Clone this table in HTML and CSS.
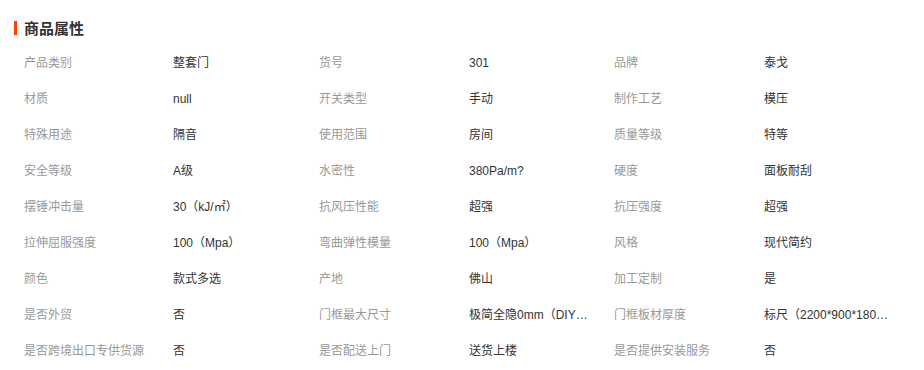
FILE: index.html
```html
<!DOCTYPE html>
<html lang="zh-CN">
<head>
<meta charset="utf-8">
<title>商品属性</title>
<link rel="stylesheet" href="styles.css">
</head>
<body>
<div class="panel">
  <h2 class="title"><span class="title-bar"></span>商品属性</h2>
  <div class="attrs">
    <div class="k">产品类别</div><div class="v">整套门</div>
    <div class="k">货号</div><div class="v">301</div>
    <div class="k">品牌</div><div class="v">泰戈</div>

    <div class="k">材质</div><div class="v">null</div>
    <div class="k">开关类型</div><div class="v">手动</div>
    <div class="k">制作工艺</div><div class="v">模压</div>

    <div class="k">特殊用途</div><div class="v">隔音</div>
    <div class="k">使用范围</div><div class="v">房间</div>
    <div class="k">质量等级</div><div class="v">特等</div>

    <div class="k">安全等级</div><div class="v">A级</div>
    <div class="k">水密性</div><div class="v">380Pa/m?</div>
    <div class="k">硬度</div><div class="v">面板耐刮</div>

    <div class="k">摆锤冲击量</div><div class="v">30（kJ/㎡）</div>
    <div class="k">抗风压性能</div><div class="v">超强</div>
    <div class="k">抗压强度</div><div class="v">超强</div>

    <div class="k">拉伸屈服强度</div><div class="v">100（Mpa）</div>
    <div class="k">弯曲弹性模量</div><div class="v">100（Mpa）</div>
    <div class="k">风格</div><div class="v">现代简约</div>

    <div class="k">颜色</div><div class="v">款式多选</div>
    <div class="k">产地</div><div class="v">佛山</div>
    <div class="k">加工定制</div><div class="v">是</div>

    <div class="k">是否外贸</div><div class="v">否</div>
    <div class="k">门框最大尺寸</div><div class="v"><span class="clip clip-a">极简全隐0mm（DIY定制尺寸）</span></div>
    <div class="k">门框板材厚度</div><div class="v"><span class="clip clip-b">标尺（2200*900*180mm）</span></div>

    <div class="k">是否跨境出口专供货源</div><div class="v">否</div>
    <div class="k">是否配送上门</div><div class="v">送货上楼</div>
    <div class="k">是否提供安装服务</div><div class="v">否</div>
  </div>
</div>
</body>
</html>
```

FILE: styles.css
```css
html, body {
  margin: 0;
  padding: 0;
  background: #ffffff;
}

body {
  font-family: "Liberation Sans", "Noto Sans CJK SC", sans-serif;
  font-size: 12px;
  color: #333333;
}

.panel {
  padding: 19px 0 0 14px;
}

.title {
  display: flex;
  align-items: center;
  margin: 0;
  height: 18px;
  font-size: 15px;
  font-weight: bold;
  color: #333333;
  font-family: "Noto Sans CJK SC", sans-serif;
  line-height: 18px;
}

.title-bar {
  display: inline-block;
  width: 3px;
  height: 14px;
  background: #ff4400;
  margin-right: 7px;
}

.attrs {
  display: grid;
  grid-template-columns: 149px 146px 150px 145px 150px 146px;
  grid-auto-rows: 36px;
  margin: 8px 0 0 10px;
}

.k, .v {
  display: flex;
  align-items: center;
  white-space: nowrap;
  overflow: hidden;
  line-height: 16px;
}

.k {
  color: #999999;
}

.v {
  color: #333333;
}

.clip {
  display: block;
  overflow: hidden;
  text-overflow: ellipsis;
  white-space: nowrap;
}

.clip-a {
  width: 123px;
}

.clip-b {
  width: 127px;
}
```
